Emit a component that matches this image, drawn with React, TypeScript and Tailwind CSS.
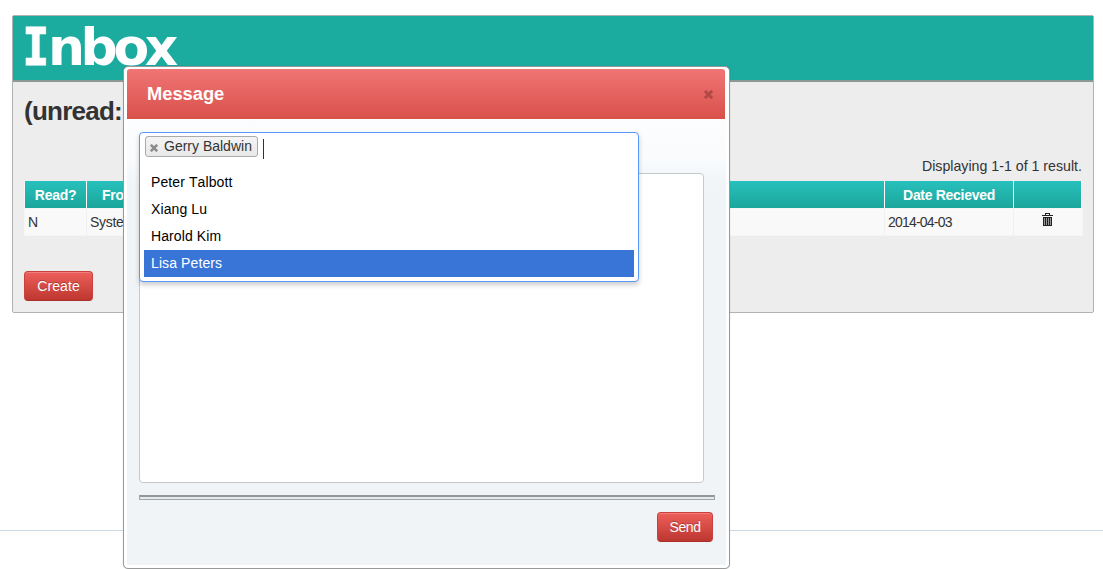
import React from "react";

const SANS = "font-['Liberation_Sans',Arial,sans-serif] [font-kerning:none]";
const BUTTON =
  "h-[30px] rounded-[4px] border border-[#c9403c] border-b-[#a92f2a] bg-linear-to-b from-[#ee5f5b] to-[#bd362f] text-center leading-[28px] text-white shadow-[inset_0_1px_0_rgba(255,255,255,0.2)] [text-shadow:0_-1px_0_rgba(0,0,0,0.25)]";
const TH = "h-[27px] border-r border-white text-center text-[14px] tracking-[-0.3px] leading-[29px] font-bold text-white";
const TD = "h-[27px] border-r border-[#f0f0f0] pl-[3px] text-[14px] leading-[27px]";

function Cross({ className }: { className: string }) {
  return (
    <svg viewBox="0 0 10 10" className={className} fill="none" stroke="currentColor" strokeWidth="3.3">
      <path d="M1 1 L9 9 M9 1 L1 9" />
    </svg>
  );
}

function Trash() {
  return (
    <svg width="11" height="13" viewBox="0 0 11 13" shapeRendering="crispEdges">
      <path d="M3 0h5v2h3v1H0V2h3zM4 1v1h3V1z" fill="#222" fillRule="evenodd" />
      <path d="M1 4h9v9H1z" fill="#222" />
      <path d="M2 5h1v7H2zM4 5h1v7H4zM6 5h1v7H6zM8 5h1v7H8z" fill="#999" />
    </svg>
  );
}

function InboxPanel() {
  return (
    <section className="mx-[12px] h-[298px] w-[1082px] rounded-[2px] border border-[#b0b3b4] bg-[#ededed]">
      <h1 className="h-[66px] overflow-hidden border-b-2 border-[#8b9896] bg-[#1bab9f] pl-[13px] font-['DejaVu_Sans',sans-serif] text-[52px] leading-[62px] font-bold tracking-[-4.4px] whitespace-nowrap text-white">
        <span className="inline-block w-[22px] origin-left scale-x-[0.86] font-['DejaVu_Sans_Mono',monospace] text-[51px] tracking-normal [-webkit-text-stroke:1.2px_white]">
          <span className="-ml-[4px]">I</span>
        </span>
        nbox
      </h1>
      <div className="px-[11px]">
        <h2 className="h-[74px] pt-[10px] text-[26px] leading-[38px] font-bold tracking-[-0.75px] text-[#333]">(unread: 1)</h2>
        <div className="h-[25px] text-right text-[14.2px] leading-[21px] text-[#333]">Displaying 1-1 of 1 result.</div>
        <div className="grid h-[27px] w-[1058px] grid-cols-[62px_160px_638px_129px_68px] border-l border-[#f5f5f5] bg-linear-to-b from-[#28c0bc] to-[#1ba69b]">
          <div className={TH}>Read?</div>
          <div className={`${TH} pl-[15px] !text-left`}>From</div>
          <div className={TH}>Subject</div>
          <div className={TH}>Date Recieved</div>
          <div className={TH} />
        </div>
        <div className="grid h-[28px] w-[1059px] grid-cols-[62px_160px_638px_129px_68px] border border-[#f5f5f5] bg-[#f9f9f9] text-[#333]">
          <div className={TD}>N</div>
          <div className={`${TD} tracking-[-0.3px]`}>System</div>
          <div className={TD} />
          <div className={`${TD} tracking-[-0.8px]`}>2014-04-03</div>
          <div className="flex justify-center pt-[4px] pr-[2px]"><Trash /></div>
        </div>
        <button className={`${BUTTON} mt-[35px] block w-[69px] text-[14px] tracking-[0.1px]`}>Create</button>
      </div>
    </section>
  );
}

function RecipientPicker() {
  const people = ["Peter Talbott", "Xiang Lu", "Harold Kim", "Lisa Peters"];
  return (
    <div className="absolute top-[13px] left-[12px] h-[150px] w-[500px] rounded-[4px] border border-[#5897fb] bg-white shadow-[0_3px_5px_rgba(0,0,0,0.2)]">
      <div className="flex h-[36px] pt-[3px] pl-[5px]">
        <div className="flex h-[21px] w-[113px] rounded-[3px] border border-[#aaa] bg-linear-to-b from-[#f4f4f4] to-[#e8e8e8] pl-[4px] text-[14px] leading-[19px] text-[#333]">
          <Cross className="mt-[7px] h-[8px] w-[8px] text-[#8c8c8c]" />
          <span className="ml-[6px] whitespace-nowrap">Gerry Baldwin</span>
        </div>
        <div className="mt-[3px] ml-[5px] h-[20px] w-px bg-[#333]" />
      </div>
      <ul className="px-[4px]">
        {people.map((name) => (
          <li
            key={name}
            className={`h-[27px] pl-[7px] text-[14px] leading-[27px] tracking-[0.1px] ${
              name === "Lisa Peters" ? "bg-[#3875d7] text-white" : "text-black"
            }`}
          >
            {name}
          </li>
        ))}
      </ul>
    </div>
  );
}

function MessageDialog() {
  return (
    <div className="absolute top-[66px] left-[123px] h-[503px] w-[607px] rounded-[5px] border border-[#999] bg-white p-[2px] shadow-[0_0_1px_rgba(0,0,0,0.3)]">
      <header className="mx-px flex h-[50px] w-[598px] justify-between rounded-t-[3px] bg-linear-to-b from-[#f07575] to-[#d9504a] pr-[12px] pl-[20px]">
        <h3 className="text-[18.3px] leading-[50px] font-bold text-white">Message</h3>
        <Cross className="mt-[21px] h-[9px] w-[9px] text-[#b04845]" />
      </header>
      <div className="relative ml-px h-[446px] w-[599px] bg-[linear-gradient(to_bottom,#fcfdfe_0px,#f9fbfd_40px,#f0f4f7_68px)] px-[12px] pt-[54px]">
        <div className="h-[310px] w-[565px] rounded-[4px] border border-[#c6c9cc] bg-white" />
        <div className="mt-[12px] h-[5px] w-[576px] border border-t-2 border-[#a2a7aa] border-t-[#929799] bg-[#e6eaed]" />
        <button className={`${BUTTON} mt-[12px] ml-[518px] block w-[56px] text-[14px] tracking-[-0.4px]`}>Send</button>
        <RecipientPicker />
      </div>
    </div>
  );
}

export default function App() {
  return (
    <main className={`${SANS} relative h-[569px] w-[1103px] overflow-hidden bg-white pt-[15px]`}>
      <InboxPanel />
      <div className="mt-[217px] h-px bg-[#c8dbe5]" />
      <MessageDialog />
    </main>
  );
}
